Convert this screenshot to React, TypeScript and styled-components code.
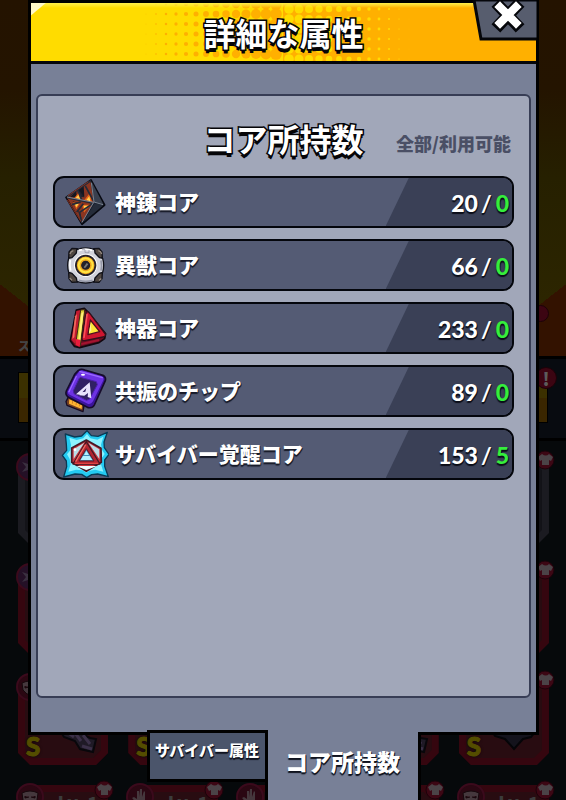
import React from "react";
import styled, { createGlobalStyle } from "styled-components";

const GlobalStyle = createGlobalStyle`
  *, *::before, *::after { box-sizing: border-box; }
  body { margin: 0; background: #06080a; }
  h1, h2, ul { margin: 0; padding: 0; }
  button { font: inherit; color: inherit; cursor: pointer; }
`;

const Page = styled.div`
  position: relative;
  display: flex;
  flex-direction: column;
  height: 100vh;
  min-height: 560px;
  overflow: hidden;
  padding: 0 27px 0 28px;
  font-family: "Noto Sans CJK JP", sans-serif;
  font-weight: 900;
`;

/* ---------- dimmed inventory behind the dialog ---------- */

const Scene = styled.div`
  position: absolute;
  inset: 0;
  z-index: 0;
  overflow: hidden;
  display: flex;
  flex-direction: column;
  background: #06090b;
`;

const Hero = styled.div`
  position: relative;
  flex: none;
  height: 359px;
  display: flex;
  align-items: flex-end;
  padding: 0 18px;
  border-bottom: 3px solid #000;
  background:
    linear-gradient(38deg, #331200 9%, transparent 9%),
    linear-gradient(-38deg, #331200 9%, transparent 9%),
    linear-gradient(#241300 0%, #241400 25%, #262000 50%, #2c2500 84%, #331e00 96%, #341500 100%);
  color: #444;
  font-size: 12px;
  line-height: 20px;
`;

const Band = styled.div`
  position: relative;
  flex: none;
  height: 82px;
  padding: 13px 18px 15px;
  border-bottom: 3px solid #000;
  background: #080b10;
`;

const GoldPlate = styled.div`
  height: 100%;
  border: 1px solid #000;
  background: linear-gradient(#3b3000 50%, #3a2600 50%);
`;

const Alert = styled.span<{ $size: number; $top: number; $right: number }>`
  position: absolute;
  top: ${(p) => p.$top}px;
  right: ${(p) => p.$right}px;
  width: ${(p) => p.$size}px;
  height: ${(p) => p.$size}px;
  border-radius: 50%;
  background: #3c0512;
  border: 1px solid #1c0208;
  color: #5c5c5c;
  font-size: 18px;
  line-height: 20px;
  text-align: center;
`;

const CardGrid = styled.div`
  display: grid;
  grid-template-columns: repeat(5, 1fr);
  grid-auto-rows: 90px;
  gap: 20px;
  padding: 14px 17px 0 18px;
`;

const Card = styled.div<{ $grey: boolean }>`
  position: relative;

  &::before {
    content: "";
    position: absolute;
    inset: 0;
    background: ${(p) => (p.$grey ? "#1b1b21" : "#35060f")};
    clip-path: polygon(8px 0, calc(100% - 8px) 0, 100% 8px, 100% calc(100% - 12px), calc(100% - 12px) 100%, 12px 100%, 0 calc(100% - 12px), 0 8px);
  }
  &::after {
    content: "";
    position: absolute;
    inset: 7px;
    background: ${(p) => (p.$grey ? "#131318" : "#280c11")};
    clip-path: polygon(8px 0, calc(100% - 8px) 0, 100% 8px, 100% calc(100% - 8px), calc(100% - 8px) 100%, 8px 100%, 0 calc(100% - 8px), 0 8px);
  }
`;

const Rank = styled.span`
  position: absolute;
  z-index: 1;
  left: 8px;
  bottom: 6px;
  color: #544d00;
  font: 900 26px/26px "Lato", sans-serif;
  -webkit-text-stroke: 1px #544d00;
  text-shadow: 0 0 3px #000;
`;

const Level = styled.span`
  position: absolute;
  z-index: 1;
  top: 5px;
  right: 10px;
  color: #3c3c3c;
  font-size: 18px;
  line-height: 24px;
`;

const CardDrawing = styled.svg`
  position: absolute;
  z-index: 1;
  left: 30px;
  bottom: 10px;
  width: 50px;
  height: 40px;
`;

const SlotBadge = styled.svg`
  position: absolute;
  z-index: 2;
  top: -2px;
  left: -2px;
  width: 28px;
  height: 28px;
`;

const ShirtBadge = styled.svg`
  position: absolute;
  z-index: 2;
  top: -5px;
  right: -6px;
  width: 20px;
  height: 20px;
`;

/* ---------- dialog ---------- */

const Dialog = styled.section`
  position: relative;
  z-index: 1;
  flex: 1;
  min-height: 0;
  display: flex;
  flex-direction: column;
  border: 3px solid #000;
  background: #788097;
`;

const TitleBar = styled.header`
  position: relative;
  flex: none;
  display: flex;
  align-items: center;
  justify-content: center;
  height: 61px;
  border-bottom: 3px solid #05060a;
  background: linear-gradient(90deg, #ffdc00 50%, #ffb000 50%);
`;

const Halftone = styled.svg`
  position: absolute;
  inset: 0 auto auto 50%;
  width: 280px;
  height: 58px;
  margin-left: -140px;
`;

const Shine = styled.span`
  position: absolute;
  inset: 0;
  background:
    linear-gradient(140deg, #fff9c8 9px, transparent 10px),
    linear-gradient(#fff04c, #ffe22800 5px);
`;

const Outlined = styled.span`
  position: relative;
  color: #fff;
  font-size: 32px;
  line-height: 40px;
  white-space: nowrap;
  -webkit-text-stroke: 3px #050508;
  paint-order: stroke fill;
  text-shadow: 0 2px 0 #050508, 0 4px 0 #050508;
`;

const CloseButton = styled.button`
  position: absolute;
  top: -3px;
  right: -3px;
  width: 67px;
  height: 42px;
  padding: 0;
  border: 0;
  background: none;

  svg { display: block; }
`;

const Body = styled.div`
  flex: 1;
  min-height: 0;
  display: flex;
  padding: 30px 5px 34px;
`;

const Panel = styled.div`
  flex: 1;
  min-width: 0;
  padding: 0 15px;
  border: 2px solid #373d55;
  border-radius: 6px;
  background: #a1a7b9;
`;

const PanelHead = styled.div`
  display: grid;
  grid-template-columns: 1fr auto 1fr;
  align-items: center;
  height: 80px;
  padding-top: 4px;
`;

const Legend = styled.span`
  grid-column: 3;
  justify-self: end;
  padding: 10px 3px 0 0;
  color: #4a4f65;
  font-size: 18px;
  line-height: 24px;
  white-space: nowrap;
`;

const Rows = styled.ul`
  display: flex;
  flex-direction: column;
  gap: 11px;
  list-style: none;
`;

const Row = styled.li`
  display: flex;
  align-items: center;
  height: 52px;
  padding-left: 6px;
  overflow: hidden;
  border: 2px solid #04060c;
  border-radius: 11px;
  background: #545b74;
`;

const CoreIcon = styled.svg`
  flex: none;
  width: 48px;
  height: 48px;
`;

const CoreName = styled.span`
  flex: 1;
  padding: 0 0 2px 6px;
  color: #fff;
  font-size: 21px;
  line-height: 28px;
  white-space: nowrap;
  text-shadow: 0 2px 1px #171a28, 1px 1px 0 #242839;
`;

const Amount = styled.span`
  display: flex;
  align-items: center;
  justify-content: flex-end;
  align-self: stretch;
  width: 28%;
  padding: 2px 3px 0 0;
  background: #3a4056;
  clip-path: polygon(23px 0, 100% 0, 100% 100%, 0 100%);
  color: #fff;
  font: 900 23px/28px "Lato", sans-serif;
  text-shadow: 0 2px 1px #0b0d18, 1px 1px 0 #141824;
`;

const Slash = styled.span`
  padding: 0 4px 0 3px;
  font-weight: 700;
`;

const Usable = styled.span`
  color: #35ee3c;
`;

const Tabs = styled.div`
  position: relative;
  z-index: 2;
  flex: none;
  display: flex;
  align-items: flex-start;
  justify-content: center;
  height: 70px;
  margin-top: -5px;
`;

const Tab = styled.button<{ $active?: boolean }>`
  display: flex;
  justify-content: center;
  width: ${(p) => (p.$active ? 156 : 121)}px;
  height: ${(p) => (p.$active ? 68 : 52)}px;
  margin: ${(p) => (p.$active ? "2px 0 0 -3px" : "0")};
  padding: ${(p) => (p.$active ? "13px 0 0" : "5px 0 0")};
  border: solid #000;
  border-width: ${(p) => (p.$active ? "0 3px" : "3px")};
  background: ${(p) => (p.$active ? "#788097" : "#4b556b")};
  color: #fff;
  font-size: ${(p) => (p.$active ? 23 : 15)}px;
  line-height: ${(p) => (p.$active ? 32 : 24)}px;
  white-space: nowrap;
  text-shadow: 0 2px 1px #10131e, 1px 1px 0 #10131e;
`;

/* ---------- drawings ---------- */

const ForgeIcon = () => (
  <CoreIcon viewBox="33 24 144 144" aria-hidden="true">
    <path d="M123 30 164 105 96 163 48 82Z" fill="#171d29" stroke="#080a12" strokeWidth="5" strokeLinejoin="round" />
    <path d="M121 34 131 96 96 158 51 83Z" fill="#8a3521" />
    <path d="M124 34 161 104 133 95Z" fill="#39404f" />
    <path d="M134 100 160 106 100 156Z" fill="#252c3a" />
    <path d="M60 81 79 62 80 83ZM83 59 101 47 103 80 84 82ZM68 94 84 99 77 112ZM83 119 91 130 94 145ZM99 130 111 114 119 108Z" fill="#151721" />
    <path d="M90 64 103 82 82 80Z" fill="#20222d" />
    <path d="M72 85 86 68 96 90ZM103 90 119 70 126 96ZM69 96 89 101 79 118ZM96 104 122 104 102 128Z" fill="#e96516" />
    <path d="M77 84 85 75 90 87ZM109 90 118 79 121 94ZM73 99 85 103 79 112ZM101 107 115 107 104 119Z" fill="#ffd253" />
    <path d="m50 82 73-50M54 84l78 16M84 62l12 30M106 48l24 44M66 104l26-8M80 126l20-25M96 158l-8-30 44-30" fill="none" stroke="#252b38" strokeWidth="5" />
    <path d="m51 81 80 16-35 60M124 38l8 58 27 8" fill="none" stroke="#7b8492" strokeWidth="3" />
    <path d="m52 90 41 65M54 77l61-42" fill="none" stroke="#bd3e23" strokeWidth="2" />
  </CoreIcon>
);

const BeastIcon = () => (
  <CoreIcon viewBox="33 213 144 144" aria-hidden="true">
    <path d="m57 246 9-11 16 1 8 14-20 21-14-8ZM156 246l-9-11-16 1-8 14 20 21 14-8ZM57 326l9 11 17-1 7-14-20-21-14 8ZM156 326l-9 11-17-1-7-14 20-21 14 8Z" fill="#4f4640" stroke="#111118" strokeWidth="4" strokeLinejoin="round" />
    <path d="M80 239q27-11 54 0l1 10 14 14 9 2q6 21 0 42l-10 3-13 14-2 10q-26 10-52 0l-2-10-13-14-10-3q-6-21 0-42l10-2 13-14Z" fill="#d3d4dc" stroke="#101119" strokeWidth="4" strokeLinejoin="round" />
    <path d="M87 241q20-6 40 0M61 270q-3 16 1 32" fill="none" stroke="#fff" strokeWidth="5" />
    <path d="M86 331q21 6 42 0M153 271q3 16 0 31" fill="none" stroke="#9598a8" strokeWidth="5" />
    <path d="M96 239h9v9h12v-8" fill="none" stroke="#9093a2" strokeWidth="2" />
    <circle cx="107" cy="286" r="35" fill="#fff" />
    <circle cx="107" cy="286" r="32" fill="#28232a" />
    <circle cx="107" cy="286" r="20" fill="none" stroke="#f0a81c" strokeWidth="13" />
    <circle cx="107" cy="286" r="21" fill="none" stroke="#ffe545" strokeWidth="6" />
    <circle cx="107" cy="286" r="12" fill="#24212a" />
    <path d="m101 292 9-13 5 4-10 12Z" fill="#777" />
    <path d="M60 252q2-8 10-10M155 252q-2-8-10-10M59 324l7 7M154 326l-7 5" fill="none" stroke="#94897f" strokeWidth="4" />
  </CoreIcon>
);

const RelicIcon = () => (
  <CoreIcon viewBox="33 27 144 144" aria-hidden="true">
    <path d="M79 45 103 40 112 49 167 116 164 131 147 143 89 158 73 154 61 137Z" fill="#6b0c20" stroke="#12080f" strokeWidth="5" strokeLinejoin="round" />
    <path d="M79 48 91 46 78 149 64 134Z" fill="#c31a30" />
    <path d="M75 64 81 57 73 127 67 132Z" fill="#f06c5c" />
    <path d="M92 45 104 44 91 151 77 147Z" fill="#e0d137" stroke="#3d3013" strokeWidth="3" />
    <path d="m94 55 7-5-10 83-7 10Z" fill="#fff17b" />
    <path d="M109 51Q115 48 120 56L166 117Q168 124 159 126L104 137Q94 138 96 128Z" fill="#ce152f" stroke="#32101b" strokeWidth="4" strokeLinejoin="round" />
    <path d="m111 59-9 68" stroke="#f95258" strokeWidth="5" strokeLinecap="round" />
    <path d="m121 75 28 35-35 9Z" fill="#ffe538" stroke="#4e101e" strokeWidth="4" strokeLinejoin="round" />
    <path d="m122 83 2 24-7 7Z" fill="#fff49b" />
    <path d="m76 132 15 2-2 22-12-6Z" fill="#e91b3c" />
    <path d="m94 147 53-12" stroke="#a41330" strokeWidth="6" />
  </CoreIcon>
);

const ChipIcon = () => (
  <CoreIcon viewBox="33 216 144 144" aria-hidden="true">
    <path d="m56 304 47 22-4 24-48-19-3-11Z" fill="#764020" stroke="#160c25" strokeWidth="4" strokeLinejoin="round" />
    <path d="m58 313 38 17-1 12-38-16Z" fill="#ffb332" />
    <path d="m68 318-1 8m12-4-1 8m11-4-1 8" stroke="#b8691c" strokeWidth="2" />
    <path d="M85 226Q94 220 104 225L159 241Q169 247 166 257L133 330Q128 340 115 338L54 306Q45 298 49 288L74 238Z" fill="#3b159a" stroke="#160c2b" strokeWidth="5" strokeLinejoin="round" />
    <path d="M88 229Q94 225 102 228L155 244Q163 249 160 256L129 319Q123 329 113 326L59 299Q51 295 55 287L80 240Z" fill="#6d32e4" />
    <path d="m90 230 67 18M79 244l-22 46" fill="none" stroke="#9a68ff" strokeWidth="4" strokeLinecap="round" />
    <path d="m91 247 48 13 3 9-24 44-9 3-37-20-2-9 17-36Z" fill="#302064" stroke="#4b20a8" strokeWidth="3" />
    <path d="M119 262 78 298 90 299 109 279 106 290 96 292 88 301 103 302 114 294 113 306 124 310Z" fill="#e8e3fc" />
    <ellipse cx="99" cy="239" rx="6" ry="3" fill="#fff" />
  </CoreIcon>
);

const AwakenIcon = () => (
  <CoreIcon viewBox="33 405 144 144" aria-hidden="true">
    <path d="m46 417 28 9 21-3 16-16 13 15 20 2 28-12-10 29 1 17 14 20-13 17 0 19 11 31-32-8-18 2-15 9-15-10-20-1-34 9 9-31-1-17-12-17 13-15-1-18Z" fill="#24caf1" stroke="#0a3a55" strokeWidth="4" strokeLinejoin="round" />
    <path d="m58 428 22 7 20-5 11-13 10 13 21 4 18-9-7 24 3 15 8 13-9 13-2 18 7 22-24-6-17 3-10 6-11-7-20-2-23 6 7-22-3-16-8-14 10-12 2-16Z" fill="#8df3ff" />
    <path d="m109 435 44 25 1 42-45 27-44-27v-43Z" fill="#c9313a" stroke="#431926" strokeWidth="5" strokeLinejoin="round" />
    <path d="m103 443-32 20v29ZM115 443l33 20v29Z" fill="#bcdde6" />
    <path d="m78 513 31 12 33-12Z" fill="#ecffff" />
    <path d="M109 440 69 507H150Z" fill="#b22431" stroke="#441824" strokeWidth="4" strokeLinejoin="round" />
    <path d="m107 449-30 51" stroke="#f0685e" strokeWidth="4" />
    <path d="m109 461-22 37h45Z" fill="#3f8cb8" stroke="#621923" strokeWidth="3" />
    <path d="m109 467-7 13h15Zm-10 16-7 12h35l-8-12Z" fill="#b4f0ff" />
    <path d="m74 505 71 0" stroke="#e04442" strokeWidth="4" />
    <circle cx="75" cy="464" r="4" fill="#fff" />
  </CoreIcon>
);

const HeaderDots = () => {
  const dots: React.ReactNode[] = [];
  for (let col = 0; col < 14; col++) {
    for (let row = 0; row < 6; row++) {
      dots.push(
        <circle key={`l${col}-${row}`} cx={2 + col * 10} cy={row * 10 + 1} r={0.4 + col * 0.42} fill="#ffb000" />,
        <circle key={`r${col}-${row}`} cx={145 + col * 10} cy={row * 10 + 6} r={Math.max(0, 4.8 - col * 0.38)} fill="#ffdc00" />,
      );
    }
  }
  return <Halftone viewBox="0 0 280 58" aria-hidden="true">{dots}</Halftone>;
};

const Shirt = () => (
  <ShirtBadge viewBox="0 0 20 20" aria-hidden="true">
    <circle cx="10" cy="10" r="9" fill="#3c0714" stroke="#1b030a" />
    <path d="m7 4-4 3 2 4 2-1v5h7v-5l2 1 2-4-4-3q-3 3-7 0Z" fill="#4b4347" />
  </ShirtBadge>
);

const Slot = ({ kind, violet }: { kind: "hand" | "mask" | "spark"; violet: boolean }) => (
  <SlotBadge viewBox="0 0 28 28" aria-hidden="true">
    <circle cx="14" cy="14" r="13" fill={violet ? "#241026" : "#2a0712"} stroke="#3b0a1c" strokeWidth="2" />
    {kind === "hand" && (
      <path d="M10 21q-1-3-4-6l2-1 3 2V8h2v6l1-8h2v8l2-6 1 1v10q0 3-3 4Z" fill="#45383d" />
    )}
    {kind === "mask" && <path d="M6 10q8-4 16 0l-1 7-3 4h-7l-4-4Zm3 3v2l4-1m2 0 4 1v-2" fill="#45383d" stroke="#16080c" />}
    {kind === "spark" && <path d="m14 5 2 6 6-2-4 5 4 5-6-2-2 6-2-6-6 2 4-5-4-5 6 2Z" fill="#3a3040" />}
  </SlotBadge>
);

const GearDrawing = ({ index }: { index: number }) => (
  <CardDrawing viewBox="0 0 50 40" aria-hidden="true">
    {index === 4 ? (
      <path d="M0 12 16 16 25 8 34 16 50 12 42 22 34 24 25 34 16 24 6 21Z" fill="#14131c" stroke="#050508" strokeWidth="2" />
    ) : (
      <>
        <path d="m4 2 5 15 5-15Z" fill="#24102c" />
        <path d="m10 12 10 5 12 1 10 5 6 1-3 13-13-3-5-8-11-4Z" fill="#1f1a26" stroke="#08070b" strokeWidth="2" />
        <path d="m19 17 7 5m1-4 6 8m2-6 7 9m-8 2 10 3" stroke="#3b3048" strokeWidth="3" />
      </>
    )}
  </CardDrawing>
);

const cores = [
  { name: "神錬コア", total: 20, usable: 0, Icon: ForgeIcon },
  { name: "異獣コア", total: 66, usable: 0, Icon: BeastIcon },
  { name: "神器コア", total: 233, usable: 0, Icon: RelicIcon },
  { name: "共振のチップ", total: 89, usable: 0, Icon: ChipIcon },
  { name: "サバイバー覚醒コア", total: 153, usable: 5, Icon: AwakenIcon },
];

const cards = Array.from({ length: 20 }, (_, i) => ({ row: Math.floor(i / 5), col: i % 5 }));
const rankedColumns = [0, 1, 4];
const levelledColumns = [0, 1, 4];

export default function App() {
  return (
    <>
      <GlobalStyle />
      <Page>
        <Scene aria-hidden="true">
          <Hero>
            ス
            <Alert $size={17} $top={305} $right={17} />
          </Hero>
          <Band>
            <GoldPlate />
            <Alert $size={22} $top={8} $right={9}>!</Alert>
          </Band>
          <CardGrid>
            {cards.map(({ row, col }) => (
              <Card key={`${row}-${col}`} $grey={row === 0}>
                <Slot kind={row < 2 ? "spark" : col === 0 || col === 4 ? "mask" : "hand"} violet={row < 2} />
                <Shirt />
                {row === 2 && <GearDrawing index={col} />}
                {row === 2 && rankedColumns.includes(col) && <Rank>S</Rank>}
                {row === 3 && levelledColumns.includes(col) && <Level>Lv. 1</Level>}
              </Card>
            ))}
          </CardGrid>
        </Scene>

        <Dialog role="dialog" aria-labelledby="dialog-title">
          <TitleBar>
            <HeaderDots />
            <Shine />
            <Outlined as="h1" id="dialog-title">詳細な属性</Outlined>
            <CloseButton type="button" aria-label="閉じる">
              <svg width="67" height="42" viewBox="0 0 67 42" aria-hidden="true">
                <path d="M2 0 9 39H67V0Z" fill="#575d6e" stroke="#05060a" strokeWidth="3" />
                <path d="M66 0V42" stroke="#000" strokeWidth="3" />
                <path d="m28 7 16 17M44 7 28 24" stroke="#05060a" strokeWidth="12" strokeLinecap="square" strokeLinejoin="round" />
                <path d="m28 7 16 16M44 7 28 23" stroke="#fff" strokeWidth="8" strokeLinecap="square" />
              </svg>
            </CloseButton>
          </TitleBar>
          <Body>
            <Panel role="tabpanel" aria-labelledby="tab-cores">
              <PanelHead>
                <span />
                <Outlined as="h2">コア所持数</Outlined>
                <Legend>全部/利用可能</Legend>
              </PanelHead>
              <Rows>
                {cores.map(({ name, total, usable, Icon }) => (
                  <Row key={name}>
                    <Icon />
                    <CoreName>{name}</CoreName>
                    <Amount>
                      {total}
                      <Slash>/</Slash>
                      <Usable>{usable}</Usable>
                    </Amount>
                  </Row>
                ))}
              </Rows>
            </Panel>
          </Body>
        </Dialog>

        <Tabs role="tablist">
          <Tab type="button" role="tab" aria-selected="false">サバイバー属性</Tab>
          <Tab type="button" role="tab" aria-selected="true" id="tab-cores" $active>コア所持数</Tab>
        </Tabs>
      </Page>
    </>
  );
}
